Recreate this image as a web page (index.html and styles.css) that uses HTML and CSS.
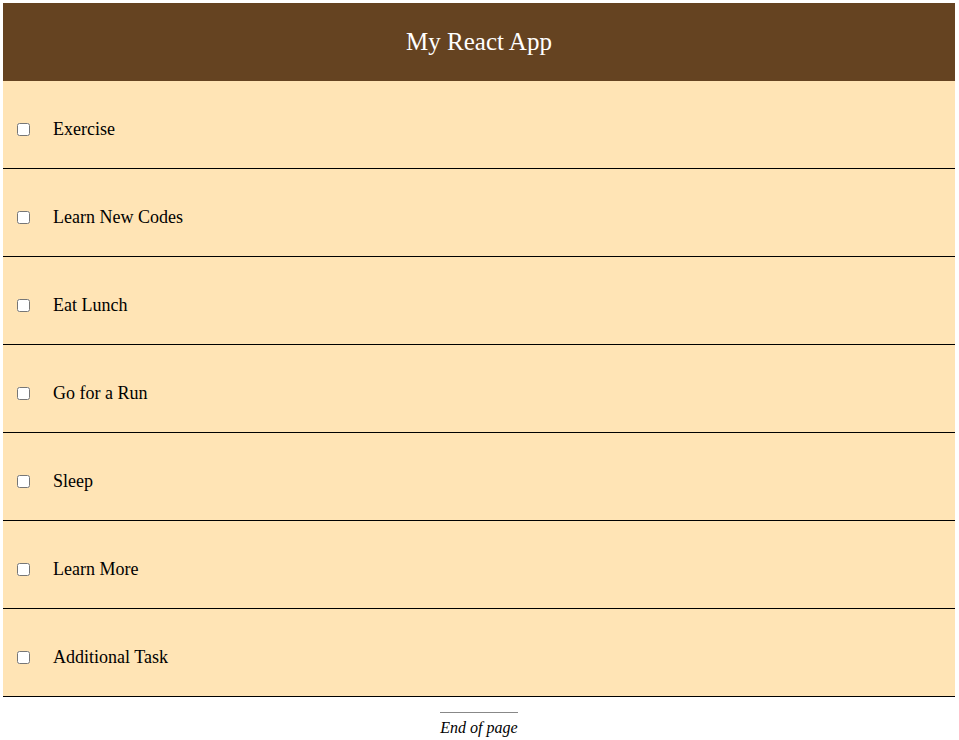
FILE: index.html
```html
<!DOCTYPE html>
<html>
<head>
<meta charset="utf-8">
<title>My React App</title>
<link rel="stylesheet" href="styles.css">
</head>
<body>
<div class="app">
  <header class="header">My React App</header>
  <main class="todo-list">
    <div class="todo-item"><input type="checkbox" class="todo-check"><span class="todo-text">Exercise</span></div>
    <div class="todo-item"><input type="checkbox" class="todo-check"><span class="todo-text">Learn New Codes</span></div>
    <div class="todo-item"><input type="checkbox" class="todo-check"><span class="todo-text">Eat Lunch</span></div>
    <div class="todo-item"><input type="checkbox" class="todo-check"><span class="todo-text">Go for a Run</span></div>
    <div class="todo-item"><input type="checkbox" class="todo-check"><span class="todo-text">Sleep</span></div>
    <div class="todo-item"><input type="checkbox" class="todo-check"><span class="todo-text">Learn More</span></div>
    <div class="todo-item"><input type="checkbox" class="todo-check"><span class="todo-text">Additional Task</span></div>
  </main>
  <footer class="footer"><span class="footer-text">End of page</span></footer>
</div>
</body>
</html>
```

FILE: styles.css
```css
html, body {
  margin: 0;
  padding: 0;
  background: #ffffff;
}

body {
  font-family: "Liberation Serif", "Times New Roman", serif;
  color: #000000;
}

.app {
  padding: 3px 4px 0 3px;
}

.header {
  height: 78px;
  background: #654321;
  color: #ffffff;
  font-size: 25px;
  display: flex;
  align-items: center;
  justify-content: center;
}

.todo-item {
  height: 77px;
  padding: 10px 0 0 10px;
  display: flex;
  align-items: center;
  background: #ffe4b5;
  border-bottom: 1px solid #000000;
}

.todo-check {
  width: 13px;
  height: 13px;
  margin: 0 3px 0 4px;
}

.todo-text {
  margin-left: 20px;
  font-size: 18px;
}

.footer {
  display: flex;
  justify-content: center;
  padding-top: 15px;
}

.footer-text {
  font-style: italic;
  font-size: 16px;
  border-top: 1px solid #888888;
  padding-top: 6px;
}
```
